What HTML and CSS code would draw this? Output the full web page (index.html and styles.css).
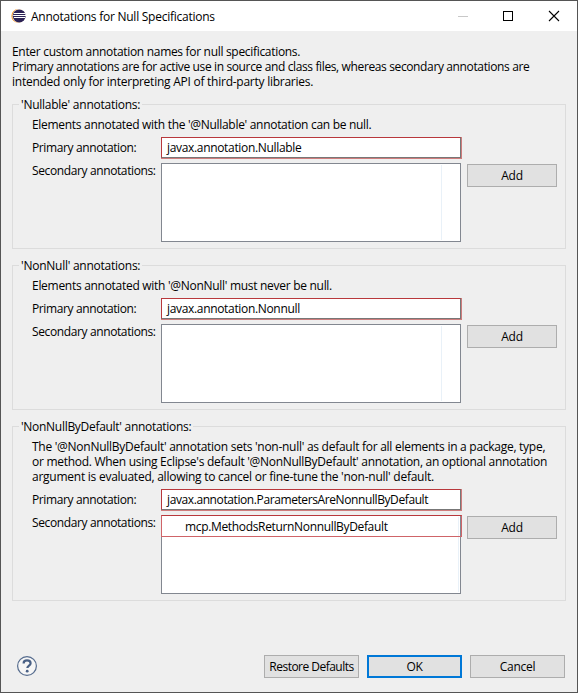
FILE: index.html
```html
<!DOCTYPE html>
<html lang="en">
<head>
<meta charset="utf-8">
<title>Annotations for Null Specifications</title>
<link rel="stylesheet" href="styles.css">
</head>
<body>
<div class="window">
  <header class="titlebar">
    <svg class="logo" width="16" height="16" viewBox="0 0 16 16">
      <circle cx="7.3" cy="7.9" r="6.9" fill="#f7941e"/>
      <circle cx="8.2" cy="7.9" r="6.8" fill="#fff"/>
      <circle cx="8.2" cy="7.9" r="6.5" fill="#2c2255"/>
      <path d="M2.8 5.5h11.4M2.2 7.5h12.8M2.8 9.5h11.4" stroke="#fff" stroke-width="1"/>
    </svg>
    <h1 class="title">Annotations for Null Specifications</h1>
    <svg class="controls" width="103" height="12" viewBox="0 0 103 12" fill="none" shape-rendering="crispEdges">
      <path d="M0 6.5h10" stroke="#c8c8c8"/>
      <rect x="45.5" y="1.5" width="9" height="9" stroke="#000"/>
      <path d="M91 1l10 10M101 1L91 11" stroke="#000" stroke-width="1.1" shape-rendering="auto"/>
    </svg>
  </header>
  <main class="content">
    <p class="intro"><span class="l1">Enter custom annotation names for null specifications.</span><span class="l2">Primary annotations are for active use in source and class files, whereas secondary annotations are</span><span class="l3">intended only for interpreting API of third-party libraries.</span></p>

    <section class="group">
      <h2 class="legend"><span class="g1">'Nullable' annotations:</span></h2>
      <p class="desc"><span class="d1">Elements annotated with the '@Nullable' annotation can be null.</span></p>
      <div class="form">
        <span class="label">Primary annotation:</span>
        <div class="field"><span class="i1">javax.annotation.Nullable</span></div>
        <span class="label second">Secondary annotations:</span>
        <div class="list"><div class="rule"></div></div>
        <button class="btn add">Add</button>
      </div>
    </section>

    <section class="group">
      <h2 class="legend"><span class="g2">'NonNull' annotations:</span></h2>
      <p class="desc"><span class="d2">Elements annotated with '@NonNull' must never be null.</span></p>
      <div class="form">
        <span class="label">Primary annotation:</span>
        <div class="field"><span class="i2">javax.annotation.Nonnull</span></div>
        <span class="label second">Secondary annotations:</span>
        <div class="list"><div class="rule"></div></div>
        <button class="btn add">Add</button>
      </div>
    </section>

    <section class="group">
      <h2 class="legend"><span class="g3">'NonNullByDefault' annotations:</span></h2>
      <p class="desc"><span class="d3">The '@NonNullByDefault' annotation sets 'non-null' as default for all elements in a package, type,</span><span class="d4">or method. When using Eclipse's default '@NonNullByDefault' annotation, an optional annotation</span><span class="d5">argument is evaluated, allowing to cancel or fine-tune the 'non-null' default.</span></p>
      <div class="form">
        <span class="label">Primary annotation:</span>
        <div class="field"><span class="i3">javax.annotation.ParametersAreNonnullByDefault</span></div>
        <span class="label second">Secondary annotations:</span>
        <div class="list wide"><div class="rule"></div><div class="item"><span class="i4">mcp.MethodsReturnNonnullByDefault</span></div></div>
        <button class="btn add">Add</button>
      </div>
    </section>
  </main>
  <footer class="footer">
    <svg class="help" width="22" height="22" viewBox="0 0 22 22">
      <circle cx="11" cy="11" r="9.4" fill="#f6f6f6" stroke="#566c8e" stroke-width="1.2"/>
      <path d="M7.6 8.4C7.6 6.3 9 5.3 11 5.3s3.6 1 3.6 2.9c0 2.3-3.3 2.4-3.3 4.9" fill="none" stroke="#4a6186" stroke-width="2.2"/>
      <circle cx="11.2" cy="16.2" r="1.4" fill="#4a6186"/>
    </svg>
    <button class="btn"><span class="rd">Restore Defaults</span></button>
    <button class="btn primary">OK</button>
    <button class="btn">Cancel</button>
  </footer>
</div>
</body>
</html>
```

FILE: styles.css
```css
* { box-sizing: border-box; }
body {
  margin: 0;
  font: 12px/15px "Open Sans", "Noto Sans", sans-serif;
  letter-spacing: -0.25px;
  color: #000;
}
h1, h2, p { margin: 0; font: inherit; }
span { white-space: nowrap; }
.window {
  width: 578px;
  height: 693px;
  display: flex;
  flex-direction: column;
  border: 1px solid #555;
  background: #efefef;
}
.titlebar {
  height: 30px;
  display: flex;
  align-items: center;
  padding: 0 16px 0 10px;
  background: #fff;
}
.title { flex: 1; margin-left: 4px; padding-top: 1px; }
.controls { display: block; }
.content { flex: 1; padding: 13px 11px 0; }
.intro span, .desc span { display: block; width: max-content; }
.l1 { letter-spacing: -0.31px; }
.l2 { letter-spacing: -0.37px; }
.d1 { letter-spacing: -0.3px; }
.d2 { letter-spacing: -0.29px; }
.d3 { letter-spacing: -0.27px; }
.d4 { letter-spacing: -0.285px; }
.g3 { letter-spacing: -0.29px; }
.i1, .i2 { letter-spacing: -0.33px; }
.i3 { letter-spacing: -0.4px; }
.i4 { letter-spacing: -0.34px; }
.rd { letter-spacing: -0.52px; }
.group {
  border: 1px solid #dcdcdc;
  padding: 0 8px 6px 19px;
  margin-bottom: 16px;
}
.intro + .group { margin-top: 15px; }
.legend {
  width: max-content;
  height: 15px;
  margin: -8px 0 5px -13px;
  padding: 0 2px;
  background: #efefef;
}
.form {
  display: grid;
  grid-template-columns: 129px 300px 96px;
  grid-template-rows: 21px 79px;
  row-gap: 5px;
  margin-top: 5px;
}
.label { width: max-content; height: max-content; padding-top: 3px; letter-spacing: -0.38px; }
.second { padding-top: 0; }
.field {
  grid-column: 2 / 4;
  width: 300px;
  position: relative;
  padding: 2px 0 0 5px;
  background: #fff;
  border: 1px solid #777;
  border-top-color: #b8383c;
  border-left-color: #b8383c;
}
.field::after {
  content: "";
  position: absolute;
  inset: -1px -2px -2px -1px;
  border: solid #cf7c7c;
  border-width: 0 1px 1px 0;
}
.list {
  display: flex;
  position: relative;
  background: #fff;
  border: 1px solid #828790;
}
.rule { width: 1px; margin: 1px 18px 1px auto; background: #e9f1f8; }
.wide .rule { margin-right: 1px; }
.item {
  position: absolute;
  inset: -1px -2px auto -1px;
  height: 22px;
  padding: 3px 0 0 23px;
  border: 1px solid #cf6468;
  border-top-color: #b8383c;
}
.btn {
  width: 95px;
  height: 23px;
  padding: 0 0 1px;
  font: inherit;
  letter-spacing: inherit;
  color: #000;
  background: #e1e1e1;
  border: 1px solid #adadad;
  border-radius: 0;
}
.btn.add { width: 90px; margin: 1px 0 0 6px; }
.btn.primary { border: 2px solid #0078d7; padding: 0 0 1px; }
.footer {
  display: flex;
  gap: 8px;
  align-items: center;
  padding: 0 12px 14px 15px;
}
.help { margin: -2px auto 0 0; }
```
